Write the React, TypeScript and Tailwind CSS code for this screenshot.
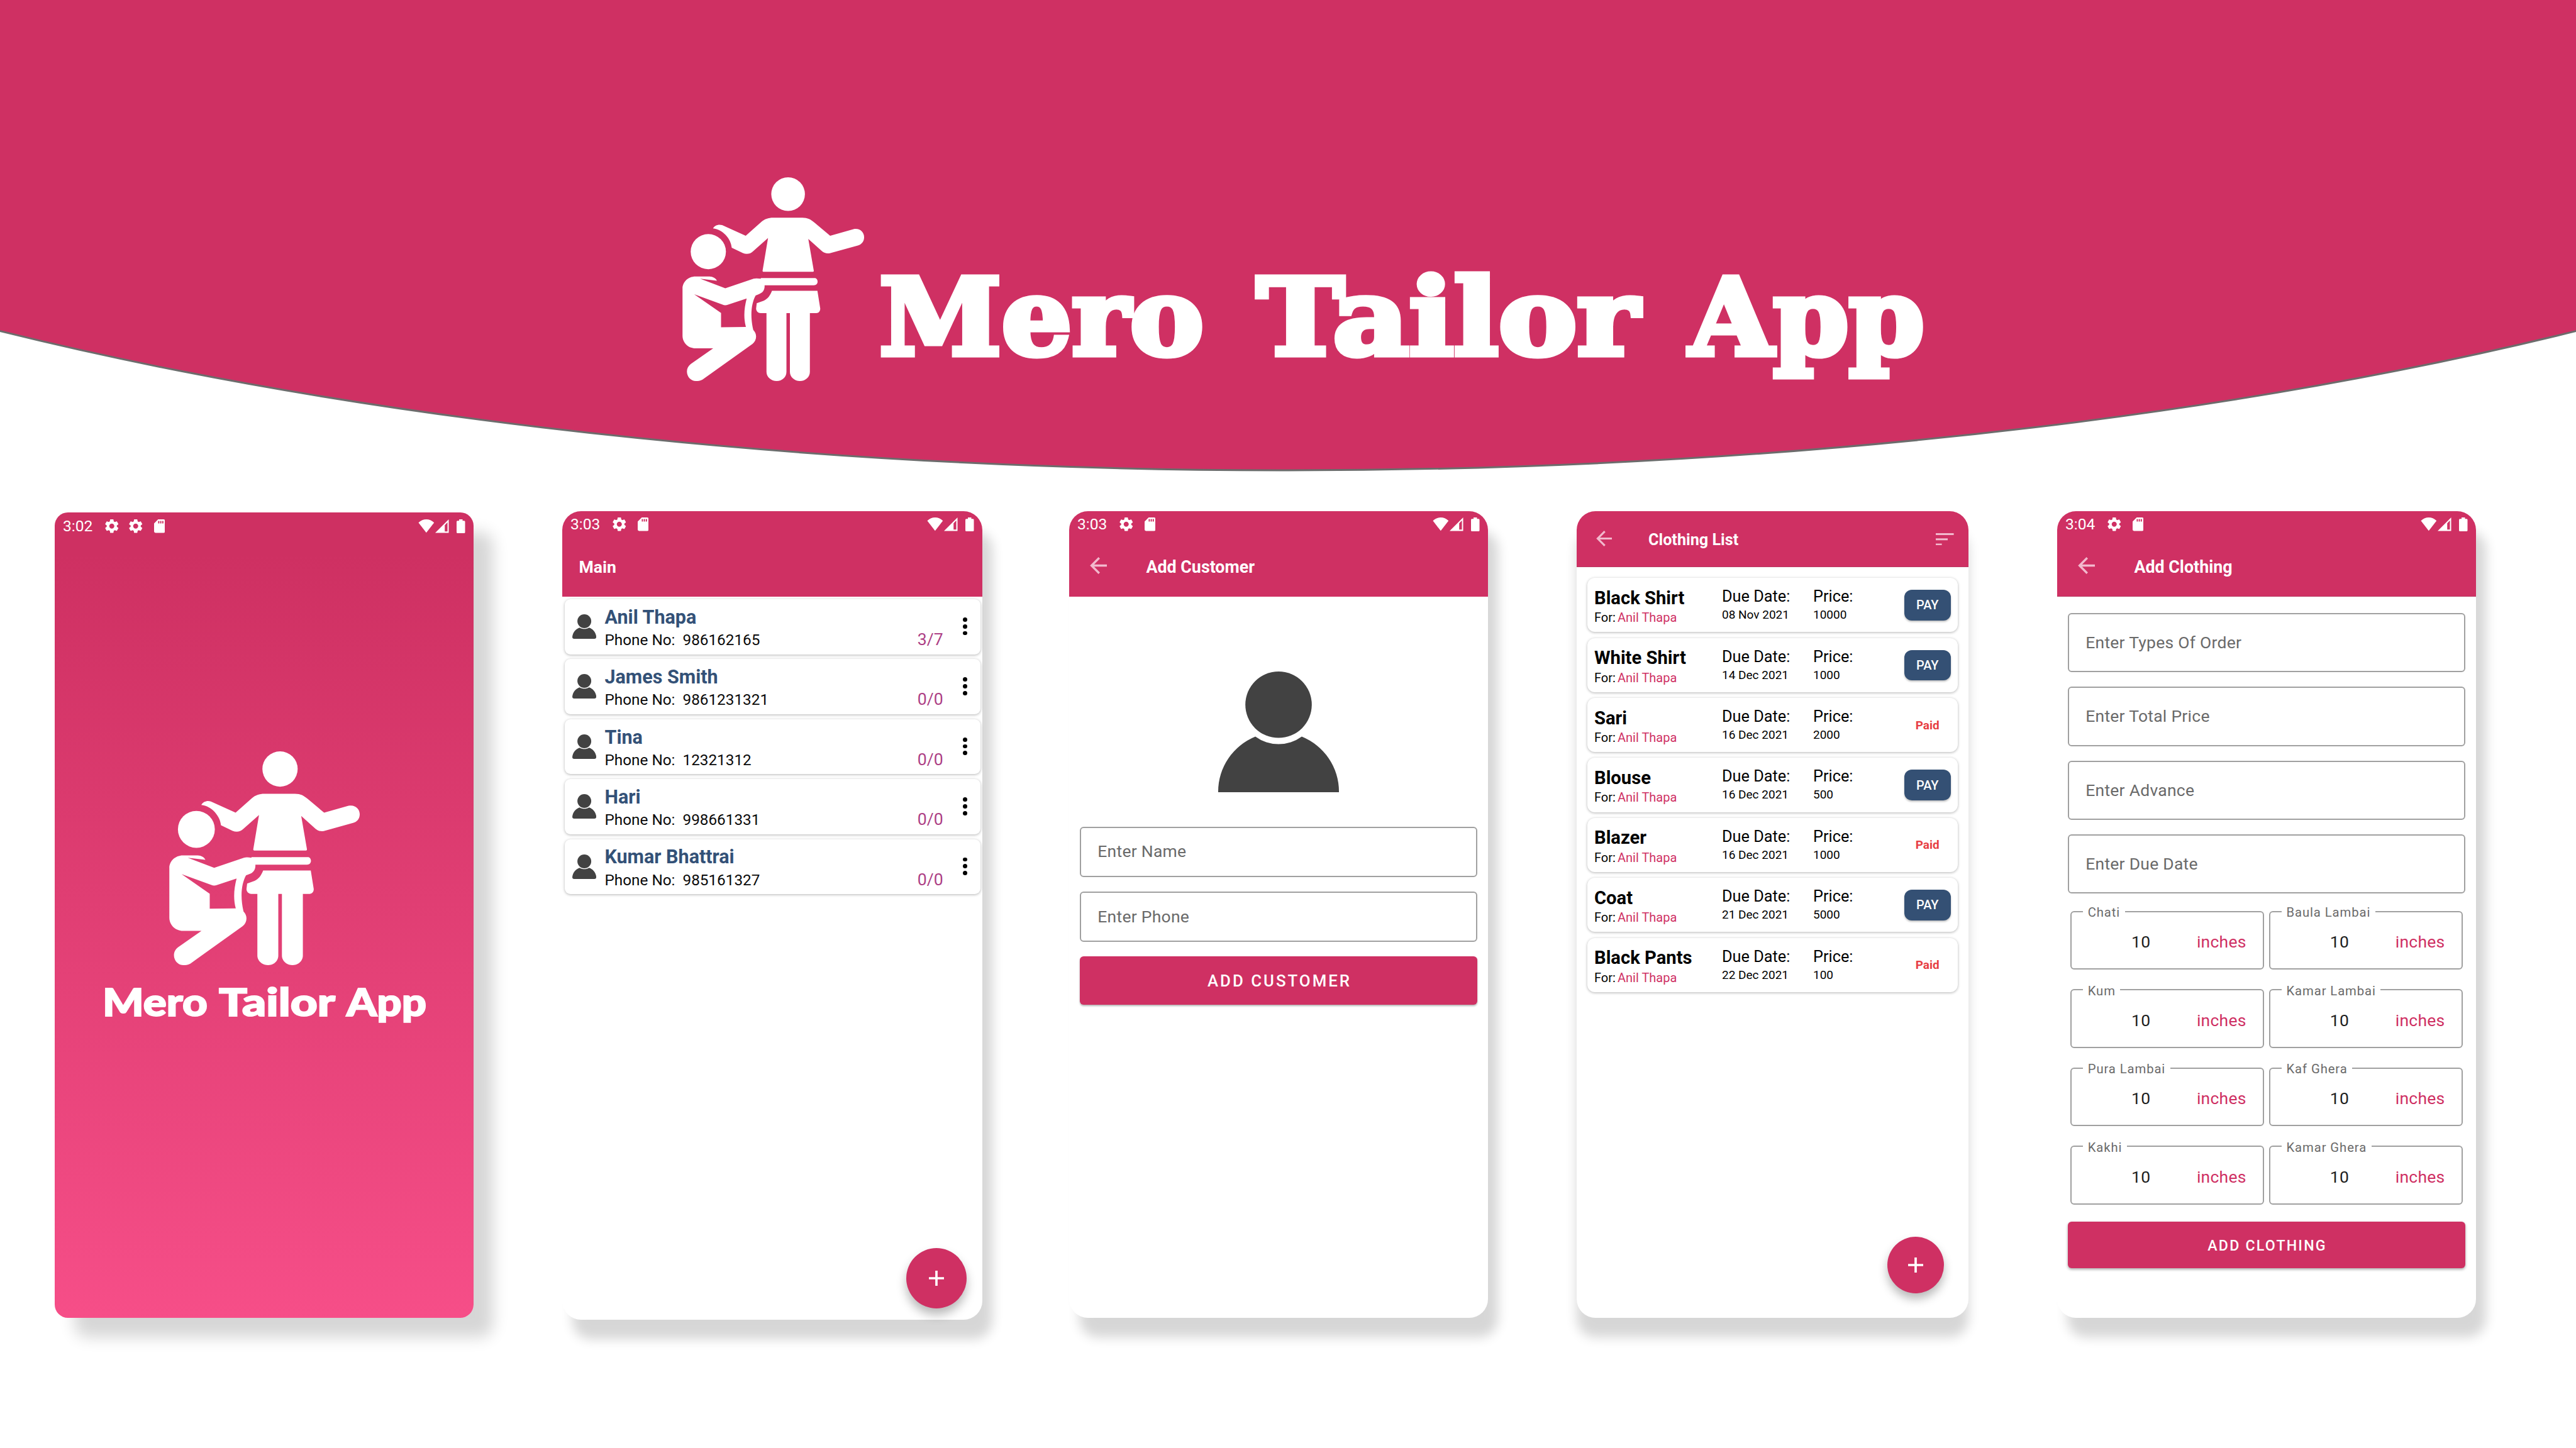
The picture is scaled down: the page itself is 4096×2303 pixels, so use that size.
import React from "react";

function TailorLogo({ className }: { className: string }) {
  return (
    <svg viewBox="52 47 1156 1296" preserveAspectRatio="none" className={className} fill="white">
      <circle cx="724.5" cy="154" r="107" />
      <circle cx="217" cy="520" r="112" />
      <path d="M630 304H815C850 304 868 315 892 335L992 419L1140 377C1180 368 1208 396 1208 428C1208 455 1192 474 1168 481L990 530C970 534 953 528 940 517L853 439L888 642Q888 648 882 648H568Q562 648 562 642L597 433L500 519C482 536 458 538 437 529L366 495C362 440 310 378 247 372C258 352 282 344 305 351L455 419L555 330C575 313 598 304 630 304Z" />
      <path
        fillRule="evenodd"
        d="M53 755C53 712 90 678 135 678H225C245 678 266 690 272 705L165 692L325 753L505 692C520 688 535 690 550 692L552 688H893C905 688 912 698 912 711C912 724 903 733 888 734H575C577 765 562 782 540 790L518 799C490 850 482 930 503 1018C530 1045 525 1085 498 1107L180 1334C165 1343 150 1343 138 1343C105 1343 81 1315 81 1282C81 1262 90 1247 105 1235L248 1135H135C90 1135 53 1100 53 1055ZM127 791L298 910V1001L456 999C440 940 445 880 461 818L340 858C330 862 318 862 308 857Z"
      />
      <path d="M622 769H911L929 882C929 900 918 911 904 911H863V1285C863 1318 835 1343 800 1343C765 1343 736 1318 736 1285V911H714V1285C714 1318 687 1343 652 1343C617 1343 587 1318 587 1285V911H550C534 911 521 898 521 882L525 848L570 832C595 820 610 800 622 769Z" />
    </svg>
  );
}

function GearIcon({ className }: { className: string }) {
  return (
    <svg viewBox="2.4 2.4 19.2 19.2" className={className} fill="white">
      <path d="M19.14 12.94c.04-.3.06-.61.06-.94 0-.32-.02-.64-.07-.94l2.03-1.58c.18-.14.23-.41.12-.61l-1.92-3.32c-.12-.22-.37-.29-.59-.22l-2.39.96c-.5-.38-1.03-.7-1.62-.94l-.36-2.54c-.04-.24-.24-.41-.48-.41h-3.84c-.24 0-.43.17-.47.41l-.36 2.54c-.59.24-1.13.57-1.62.94l-2.39-.96c-.22-.08-.47 0-.59.22L2.74 8.87c-.12.21-.08.47.12.61l2.03 1.58c-.05.3-.09.63-.09.94s.02.64.07.94l-2.03 1.58c-.18.14-.23.41-.12.61l1.92 3.32c.12.22.37.29.59.22l2.39-.96c.5.38 1.03.7 1.62.94l.36 2.54c.05.24.24.41.48.41h3.84c.24 0 .44-.17.47-.41l.36-2.54c.59-.24 1.13-.56 1.62-.94l2.39.96c.22.08.47 0 .59-.22l1.92-3.32c.12-.22.07-.47-.12-.61l-2.01-1.58zM12 15.6c-1.98 0-3.6-1.62-3.6-3.6s1.62-3.6 3.6-3.6 3.6 1.62 3.6 3.6-1.62 3.6-3.6 3.6z" />
    </svg>
  );
}

function StatusBar({ time, gears = 1 }: { time: string; gears?: number }) {
  return (
    <div className="flex h-[42px] shrink-0 items-center pl-[13px] pr-[13.5px]">
      <span className="w-[67px] text-[24.6px] leading-none text-white">{time}</span>
      <div className="flex gap-[16.5px]">
        <GearIcon className="size-[21.5px]" />
        {gears > 1 && <GearIcon className="size-[21.5px]" />}
      </div>
      <svg viewBox="0 0 16 20" className="ml-[18px] h-[21.5px] w-[17.2px]" fill="white">
        <path
          fillRule="evenodd"
          d="M6 0H14Q16 0 16 2V18Q16 20 14 20H2Q0 20 0 18V6ZM6 2.3V6H7.8V2.3ZM9 2.3V6H10.8V2.3ZM12 2.3V6H13.8V2.3Z"
        />
      </svg>
      <div className="ml-auto flex items-center">
        <svg viewBox="0 0 26 22" className="h-[21.5px] w-[25.7px]" fill="white">
          <path d="M0.3 5.4C7.5 -1.8 18.5 -1.8 25.7 5.4L13 21.8Z" />
        </svg>
        <svg viewBox="0 0 24 24" className="ml-[1.5px] size-[21.5px]" fill="white">
          <path fillRule="evenodd" d="M0 24L24 0V24ZM17 10.2V21.4H21.8V5.4Z" />
        </svg>
        <svg viewBox="0 0 13.5 22" className="ml-[12.4px] h-[22px] w-[13.5px]" fill="white">
          <path d="M4 0H9.5V2.2H12Q13.5 2.2 13.5 3.8V20.4Q13.5 22 12 22H1.5Q0 22 0 20.4V3.8Q0 2.2 1.5 2.2H4Z" />
        </svg>
      </div>
    </div>
  );
}

function BackArrow({ className }: { className: string }) {
  return (
    <svg viewBox="0 0 27 27" className={className} fill="none" stroke="#f2b9cd" strokeWidth="3.4">
      <path d="M27 13.5H3M14.8 1.3L2.6 13.5L14.8 25.7" />
    </svg>
  );
}

function Fab({ className }: { className: string }) {
  return (
    <div className={`absolute flex items-center justify-center rounded-full bg-[#cf3063] ${className}`}>
      <svg viewBox="0 0 24 24" className="size-[24px]" stroke="white" strokeWidth="3.7">
        <path d="M12 0V24M0 12H24" />
      </svg>
    </div>
  );
}

function SmallPerson() {
  return (
    <svg viewBox="0 0 51 52" className="mt-[24px] h-[39px] w-[38.2px]" fill="#424242">
      <circle cx="25.5" cy="14.7" r="14.7" />
      <path d="M4 52Q0 52 0 48C1 38 7 31 15.5 28.2C21 32 30 32 35.5 28.2C44 31 50 38 51 48Q51 52 47 52Z" />
    </svg>
  );
}

const customers = [
  { name: "Anil Thapa", phone: "986162165", count: "3/7" },
  { name: "James Smith", phone: "9861231321", count: "0/0" },
  { name: "Tina", phone: "12321312", count: "0/0" },
  { name: "Hari", phone: "998661331", count: "0/0" },
  { name: "Kumar Bhattrai", phone: "985161327", count: "0/0" },
];

const clothes = [
  { name: "Black Shirt", date: "08 Nov 2021", price: "10000", paid: false },
  { name: "White Shirt", date: "14 Dec 2021", price: "1000", paid: false },
  { name: "Sari", date: "16 Dec 2021", price: "2000", paid: true },
  { name: "Blouse", date: "16 Dec 2021", price: "500", paid: false },
  { name: "Blazer", date: "16 Dec 2021", price: "1000", paid: true },
  { name: "Coat", date: "21 Dec 2021", price: "5000", paid: false },
  { name: "Black Pants", date: "22 Dec 2021", price: "100", paid: true },
];

const measures = [
  "Chati",
  "Baula Lambai",
  "Kum",
  "Kamar Lambai",
  "Pura Lambai",
  "Kaf Ghera",
  "Kakhi",
  "Kamar Ghera",
];

function Splash() {
  return (
    <section className="mt-[2px] flex h-[1281px] w-[666px] flex-col rounded-[21px] bg-linear-to-b from-[#ce3062] from-5% to-[#f64e88] pt-[1px] shadow-[31px_31px_24px_rgba(0,0,0,0.16)]">
      <StatusBar time="3:02" gears={2} />
      <TailorLogo className="ml-[182px] mt-[337px] h-[340px] w-[303px]" />
      <svg viewBox="0 0 520 80" className="ml-[75px] mt-[21px] h-[80px] w-[520px] overflow-visible" fill="white">
        <g className="font-['Lato'] text-[61px] font-black" stroke="white" strokeWidth="2">
          <text x="1" y="60" textLength="167" lengthAdjust="spacingAndGlyphs">Mero</text>
          <text x="186" y="60" textLength="185" lengthAdjust="spacingAndGlyphs">Tailor</text>
          <text x="389" y="60" textLength="127" lengthAdjust="spacingAndGlyphs">App</text>
        </g>
      </svg>
    </section>
  );
}

function MainList() {
  return (
    <section className="relative ml-[141px] flex h-[1286px] w-[668px] flex-col rounded-[30px] bg-white shadow-[16px_31px_18px_rgba(0,0,0,0.16)]">
      <header className="h-[136px] shrink-0 rounded-t-[30px] bg-[#cf3063]">
        <StatusBar time="3:03" />
        <h2 className="ml-[26.5px] mt-[34.3px] text-[26.6px] font-bold leading-none text-white">Main</h2>
      </header>
      <div className="flex flex-col gap-[7.8px] px-[3.5px] pt-[4px]">
        {customers.map((c) => (
          <div
            key={c.name}
            className="flex h-[87.6px] items-start rounded-[9px] bg-white pl-[12.5px] shadow-[0_1px_4px_rgba(0,0,0,0.3)]"
          >
            <SmallPerson />
            <div className="ml-[13.3px] pt-[13.8px]">
              <div className="text-[30.5px] font-bold leading-[30px] text-[#335177]">{c.name}</div>
              <div className="mt-[9.3px] flex text-[24.3px] leading-[24px] text-[#0a0a0a]">
                <span className="w-[124px]">Phone No:</span>
                <span>{c.phone}</span>
              </div>
            </div>
            <span className="ml-auto pt-[50px] text-[26.6px] leading-[27px] text-[#ad3f85]">{c.count}</span>
            <div className="ml-[31.5px] mr-[20.5px] mt-[29px] flex flex-col gap-[4px]">
              <span className="size-[6.8px] rounded-full bg-black" />
              <span className="size-[6.8px] rounded-full bg-black" />
              <span className="size-[6.8px] rounded-full bg-black" />
            </div>
          </div>
        ))}
      </div>
      <Fab className="bottom-[18px] right-[25px] size-[96px] shadow-[0_10px_16px_rgba(0,0,0,0.28)]" />
    </section>
  );
}

function AddCustomer() {
  return (
    <section className="ml-[138px] flex h-[1283px] w-[666px] flex-col rounded-[30px] bg-white shadow-[16px_31px_18px_rgba(0,0,0,0.16)]">
      <header className="h-[135.5px] shrink-0 rounded-t-[30px] bg-[#cf3063]">
        <StatusBar time="3:03" />
        <div className="flex items-start pl-[33px]">
          <BackArrow className="mt-[31px] size-[27px]" />
          <h2 className="ml-[62.5px] mt-[34px] text-[26.8px] font-bold leading-none text-white">Add Customer</h2>
        </div>
      </header>
      <svg viewBox="0 0 256 256" className="mt-[119.5px] size-[192px] self-center" fill="#424242">
        <circle cx="128" cy="70.4" r="70.4" />
        <path d="M0 256V254A128 126 0 0 1 78.8 137.9A83.3 83.3 0 0 0 177.2 137.9A128 126 0 0 1 256 254V256Z" />
      </svg>
      <div className="mt-[54.5px] flex flex-col gap-[23.2px] px-[17.3px]">
        {["Enter Name", "Enter Phone"].map((label) => (
          <div
            key={label}
            className="flex h-[80.2px] items-center rounded-[6px] border-2 border-[#a0a0a0] pl-[26px] text-[26.5px] leading-none tracking-[0.25px] text-[#6a6a6a]"
          >
            {label}
          </div>
        ))}
        <button className="h-[77px] rounded-[6px] bg-[#cf3063] pl-[3px] pt-[3px] text-[25.8px] font-medium leading-none tracking-[3px] text-white shadow-[0_2px_3px_rgba(0,0,0,0.3)]">
          ADD CUSTOMER
        </button>
      </div>
    </section>
  );
}

function ClothingList() {
  return (
    <section className="relative ml-[141px] flex h-[1283px] w-[623px] flex-col rounded-[30px] bg-white shadow-[0_31px_18px_rgba(0,0,0,0.16)]">
      <header className="flex h-[89px] shrink-0 items-start rounded-t-[30px] border-b border-[#b83a63] bg-[#cf3063] pl-[31px]">
        <BackArrow className="mt-[31px] size-[25px]" />
        <h2 className="ml-[58px] mt-[33px] text-[25.2px] font-bold leading-none text-white">Clothing List</h2>
        <svg viewBox="0 0 28.6 19.6" className="ml-auto mr-[23px] mt-[34.5px] h-[19.6px] w-[28.6px]" fill="#f2b9cd">
          <path d="M0 0H28.6V3H0ZM0 8.3H19V11.3H0ZM0 16.6H9.6V19.6H0Z" />
        </svg>
      </header>
      <div className="flex flex-col gap-[9.2px] px-[17px] pt-[17.3px]">
        {clothes.map((c) => (
          <div
            key={c.name}
            className="flex h-[86.2px] items-start rounded-[12px] bg-white pl-[11px] pr-[11px] leading-none text-black shadow-[0_1px_4px_rgba(0,0,0,0.3)]"
          >
            <div className="w-[203px] pt-[17.5px]">
              <div className="text-[29.2px] font-bold leading-[29px]">{c.name}</div>
              <div className="mt-[6.5px] flex text-[20px] leading-[20px]">
                <span className="w-[37px]">For:</span>
                <span className="text-[#cf3063]">Anil Thapa</span>
              </div>
            </div>
            <div className="w-[145px] pt-[17px]">
              <div className="text-[25.3px] leading-[25px]">Due Date:</div>
              <div className="mt-[7px] text-[19px] leading-[19px]">{c.date}</div>
            </div>
            <div className="pt-[17px]">
              <div className="text-[25.3px] leading-[25px]">Price:</div>
              <div className="mt-[7px] text-[19px] leading-[19px]">{c.price}</div>
            </div>
            {c.paid ? (
              <span className="ml-auto w-[74.5px] self-center text-center text-[19px] font-bold text-[#e73f43]">Paid</span>
            ) : (
              <button className="ml-auto h-[48.5px] w-[74.5px] self-center rounded-[12px] bg-[#345074] text-[20px] font-medium text-white shadow-[0_2px_3px_rgba(0,0,0,0.25)]">
                PAY
              </button>
            )}
          </div>
        ))}
      </div>
      <Fab className="bottom-[39.5px] right-[39.5px] size-[89.4px] shadow-[0_9px_15px_rgba(0,0,0,0.28)]" />
    </section>
  );
}

function AddClothing() {
  return (
    <section className="ml-[141px] flex h-[1283px] w-[666px] flex-col rounded-[30px] bg-white shadow-[16px_31px_18px_rgba(0,0,0,0.16)]">
      <header className="h-[135.5px] shrink-0 rounded-t-[30px] border-b border-[#b83a63] bg-[#cf3063]">
        <StatusBar time="3:04" />
        <div className="flex items-start pl-[33px]">
          <BackArrow className="mt-[31px] size-[27px]" />
          <h2 className="ml-[62.5px] mt-[34px] text-[26.8px] font-bold leading-none text-white">Add Clothing</h2>
        </div>
      </header>
      <div className="flex flex-col gap-[23.2px] px-[17.2px] pt-[26.5px]">
        {["Enter Types Of Order", "Enter Total Price", "Enter Advance", "Enter Due Date"].map((label) => (
          <div
            key={label}
            className="flex h-[94.2px] items-center rounded-[6px] border-2 border-[#a0a0a0] pl-[26px] text-[26.5px] leading-none tracking-[0.25px] text-[#6a6a6a]"
          >
            {label}
          </div>
        ))}
      </div>
      <div className="mt-[27.2px] grid grid-cols-2 gap-x-[7.6px] gap-y-[30.9px] px-[21px]">
        {measures.map((label) => (
          <div
            key={label}
            className="relative flex h-[93.7px] items-start rounded-[6px] border-2 border-[#a0a0a0] pt-[33.5px] text-[26.5px] leading-[27px] tracking-[0.25px]"
          >
            <span className="absolute left-[18.2px] top-[-10.5px] bg-white px-[7.5px] text-[20.3px] leading-[22px] tracking-[0.9px] text-[#6a6a6a]">
              {label}
            </span>
            <span className="ml-[95px] text-[#202020]">10</span>
            <span className="ml-auto mr-[26.5px] text-[#cf3063]">inches</span>
          </div>
        ))}
      </div>
      <button className="mx-[17.2px] mt-[27px] h-[73.6px] rounded-[6px] bg-[#cf3063] pl-[2px] pt-[3px] text-[23.2px] font-medium leading-none tracking-[2.2px] text-white shadow-[0_2px_4px_rgba(0,0,0,0.35)]">
        ADD CLOTHING
      </button>
    </section>
  );
}

export default function App() {
  return (
    <div className="h-[2303px] w-[4096px] overflow-hidden bg-white font-['Roboto',sans-serif]">
      <div className="relative h-[813px]">
        <svg viewBox="0 0 4096 813" className="absolute inset-0 h-[813px] w-[4096px]">
          <ellipse cx="2048" cy="-224" rx="3223" ry="972" fill="#cf3063" stroke="#6c6c6c" strokeWidth="3" />
        </svg>
        <div className="relative flex items-start pl-[1085px] pt-[282px]">
          <TailorLogo className="h-[324px] w-[289px]" />
          <svg viewBox="0 0 1680 220" className="ml-[20px] mt-[128px] h-[220px] w-[1680px] overflow-visible" fill="white">
            <g className="font-['DejaVu_Serif'] text-[168px] font-bold" stroke="white" strokeWidth="9">
              <text x="4" y="154" textLength="516" lengthAdjust="spacingAndGlyphs">Mero</text>
              <text x="604" y="154" textLength="608" lengthAdjust="spacingAndGlyphs">Tailor</text>
              <text x="1292" y="154" textLength="374" lengthAdjust="spacingAndGlyphs">App</text>
            </g>
          </svg>
        </div>
      </div>
      <main className="flex items-start pl-[87px]">
        <Splash />
        <MainList />
        <AddCustomer />
        <ClothingList />
        <AddClothing />
      </main>
    </div>
  );
}
